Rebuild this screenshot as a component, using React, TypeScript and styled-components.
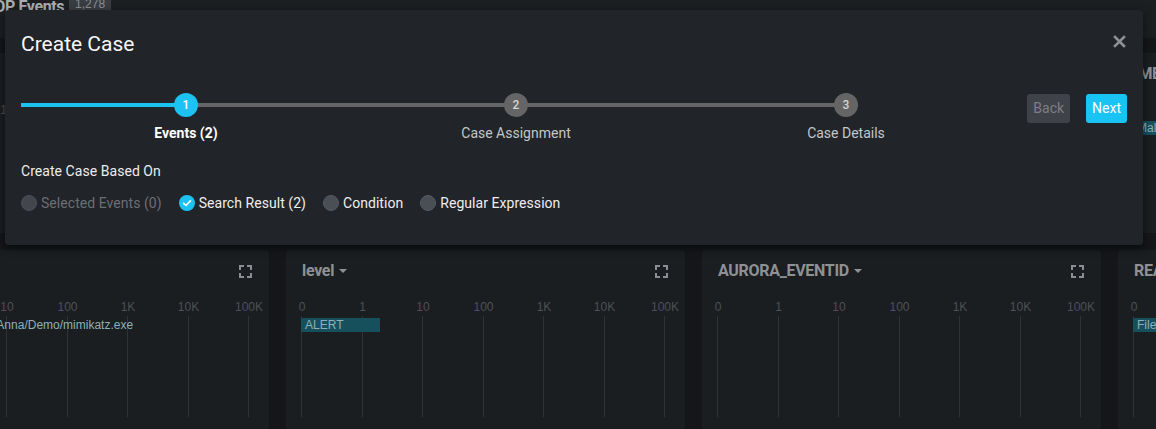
import React from "react";
import styled, { createGlobalStyle } from "styled-components";

const GlobalStyle = createGlobalStyle`
  html, body { margin: 0; padding: 0; background: #141619; }
  body { font-family: Roboto, "Liberation Sans", sans-serif; overflow: hidden; }
`;

const Screen = styled.div`
  position: relative;
  width: 1156px;
  height: 429px;
  overflow: hidden;
  background: #141619;
`;

/* ---------- background dashboard ---------- */

const TopBar = styled.header`
  display: flex;
  align-items: flex-start;
  gap: 5px;
  height: 46px;
  margin-top: -8px;
  padding-top: 5px;
  box-sizing: border-box;
  background: #1c1f22;
`;

const TopTitle = styled.h1`
  margin: 0 0 0 -15px;
  font: 700 16px/20px Roboto, sans-serif;
  letter-spacing: -0.4px;
  color: #a9acb0;
  white-space: nowrap;
`;

const Badge = styled.span`
  display: inline-block;
  margin-top: -2px;
  padding: 0 6px;
  height: 18px;
  border-radius: 3px;
  background: #393c41;
  color: #8b8e92;
  font: 400 12px/18px "Liberation Sans", Arial, sans-serif;
`;

const PanelGrid = styled.div`
  display: grid;
  grid-template-columns: repeat(4, 399px);
  column-gap: 17px;
  row-gap: 17px;
  margin: 15px 0 0 -130px;
`;

const Panel = styled.section`
  height: 180px;
  background: #1b1e21;
  border-radius: 4px;
  display: flex;
  flex-direction: column;
  overflow: hidden;
`;

const PanelHead = styled.div`
  height: 42px;
  padding: 0 17px 0 16px;
  display: flex;
  align-items: center;
  justify-content: space-between;
`;

const PanelTitle = styled.div`
  display: inline-flex;
  align-items: center;
  gap: 5px;
  font: 700 16px/20px Roboto, sans-serif;
  letter-spacing: -0.3px;
  color: #8e9195;
  white-space: nowrap;
`;

const Caret = styled.span`
  width: 0;
  height: 0;
  border-left: 4px solid transparent;
  border-right: 4px solid transparent;
  border-top: 4px solid #8e9195;
`;

const Chart = styled.div`
  margin: 8px 21px 0 15px;
  position: relative;
`;

const AxisLabels = styled.div`
  position: relative;
  height: 14px;
`;

const Tick = styled.span`
  position: absolute;
  top: 0;
  transform: translateX(-50%);
  font: 400 12px/14px "Liberation Sans", Arial, sans-serif;
  color: #4d5156;
  white-space: nowrap;
`;

const Plot = styled.div`
  position: relative;
  margin-top: 2px;
  height: 101px;
`;

const GridLine = styled.span`
  position: absolute;
  top: 0;
  bottom: 0;
  width: 1px;
  background: #2f3337;
`;

const Bars = styled.div`
  position: relative;
  padding-top: 2px;
  display: flex;
  flex-direction: column;
  gap: 4px;
`;

const Bar = styled.div`
  height: 14px;
  box-sizing: border-box;
  padding-left: 4px;
  background: #17505d;
  color: #8db0b9;
  font: 400 12px/14px "Liberation Sans", Arial, sans-serif;
  white-space: nowrap;
  overflow: visible;
`;

const ExpandIcon = () => (
  <svg width="13" height="13" viewBox="0 0 13 13" fill="none" stroke="#8a8d91" strokeWidth="2">
    <path d="M1 5V1H5M8 1H12V5M12 8V12H8M5 12H1V8" />
  </svg>
);

const ticks = ["0", "1", "10", "100", "1K", "10K", "100K"];
const STEP = 60.5;

type BarData = { label: string; value: number };
type PanelData = { title: string; bars: BarData[] };

const pos = (v: number) => (v <= 0 ? 0 : (1 + Math.log10(v)) * STEP);

const ChartPanel = ({ data }: { data: PanelData }) => (
  <Panel>
    <PanelHead>
      <PanelTitle>
        {data.title}
        <Caret />
      </PanelTitle>
      <ExpandIcon />
    </PanelHead>
    <Chart>
      <AxisLabels>
        {ticks.map((t, i) => (
          <Tick key={t} style={{ left: i * STEP + 1 }}>
            {t}
          </Tick>
        ))}
      </AxisLabels>
      <Plot>
        {ticks.map((t, i) => (
          <GridLine key={t} style={{ left: i * STEP }} />
        ))}
        <Bars>
          {data.bars.map((b) => (
            <Bar key={b.label} style={{ width: pos(b.value) }}>
              {b.label}
            </Bar>
          ))}
        </Bars>
      </Plot>
    </Chart>
  </Panel>
);

const panels: PanelData[] = [
  { title: "EventType", bars: [{ label: "1", value: 2 }] },
  { title: "source", bars: [{ label: "Sigma", value: 2 }] },
  { title: "RuleName", bars: [{ label: "Mimikatz", value: 2 }] },
  { title: "IMEI", bars: [{ label: "Malware detected", value: 2 }] },
  { title: "Image", bars: [{ label: "C:/Users/Max/Tools/Anna/Demo/mimikatz.exe", value: 2 }] },
  { title: "level", bars: [{ label: "ALERT", value: 2 }] },
  { title: "AURORA_EVENTID", bars: [] },
  { title: "REASON", bars: [{ label: "File created", value: 2 }] },
];

/* ---------- modal ---------- */

const Modal = styled.div`
  position: absolute;
  left: 5px;
  top: 10px;
  width: 1138px;
  height: 235px;
  box-sizing: border-box;
  padding: 21px 16px 0 16px;
  background: #212428;
  border-radius: 4px;
  box-shadow: 0 3px 8px rgba(0, 0, 0, 0.55);
  display: flex;
  flex-direction: column;
`;

const ModalHeader = styled.div`
  display: flex;
  justify-content: space-between;
  align-items: flex-start;
  height: 26px;
`;

const Title = styled.h2`
  margin: 0;
  font: 400 21px/26px Roboto, sans-serif;
  color: #f6f6f6;
`;

const CloseButton = styled.button`
  margin: 4px 1px 0 0;
  padding: 0;
  border: 0;
  background: transparent;
  width: 13px;
  height: 13px;
  display: flex;
  cursor: pointer;
`;

const StepRow = styled.div`
  margin-top: 36px;
  display: flex;
  justify-content: space-between;
  align-items: flex-start;
`;

const Stepper = styled.div`
  display: flex;
  width: 990px;
`;

const Step = styled.div<{ $left: string; $right: string }>`
  width: 330px;
  display: flex;
  flex-direction: column;
  align-items: center;
  position: relative;

  &::before,
  &::after {
    content: "";
    position: absolute;
    top: 10px;
    height: 4px;
  }
  &::before {
    left: 0;
    right: 50%;
    background: ${(p) => p.$left};
  }
  &::after {
    left: 50%;
    right: 0;
    background: ${(p) => p.$right};
  }
`;

const StepCircle = styled.div<{ $active?: boolean }>`
  position: relative;
  z-index: 1;
  width: 24px;
  height: 24px;
  border-radius: 50%;
  background: ${(p) => (p.$active ? "#1bc2f2" : "#656565")};
  color: ${(p) => (p.$active ? "#ffffff" : "#d4d4d4")};
  font: 500 12px/24px Roboto, sans-serif;
  text-align: center;
`;

const StepLabel = styled.div<{ $active?: boolean }>`
  margin-top: 8px;
  font: ${(p) => (p.$active ? 700 : 400)} 14px/16px Roboto, sans-serif;
  color: ${(p) => (p.$active ? "#ffffff" : "#c3c7cb")};
  white-space: nowrap;
`;

const Actions = styled.div`
  display: flex;
  gap: 16px;
  margin-top: 1px;
`;

const Button = styled.button<{ $primary?: boolean }>`
  height: 29px;
  padding: 0 6px;
  border: 0;
  border-radius: 3px;
  font: 400 14px/29px Roboto, sans-serif;
  background: ${(p) => (p.$primary ? "#19c3f3" : "#3f4349")};
  color: ${(p) => (p.$primary ? "#ffffff" : "#7b7f85")};
  cursor: ${(p) => (p.$primary ? "pointer" : "default")};
`;

const SectionLabel = styled.div`
  margin-top: 22px;
  font: 400 14px/16px Roboto, sans-serif;
  letter-spacing: 0.05px;
  color: #ececec;
`;

const RadioRow = styled.div`
  margin-top: 15px;
  display: flex;
  align-items: center;
  gap: 17px;
`;

const RadioItem = styled.label<{ $disabled?: boolean }>`
  display: inline-flex;
  align-items: center;
  gap: 4px;
  font: 400 14px/18px Roboto, sans-serif;
  letter-spacing: 0.05px;
  color: ${(p) => (p.$disabled ? "#6b6f75" : "#eeeeee")};
  white-space: nowrap;
`;

const RadioDot = styled.span<{ $disabled?: boolean }>`
  width: 16px;
  height: 16px;
  box-sizing: border-box;
  border-radius: 50%;
  background: ${(p) => (p.$disabled ? "#43474d" : "#4a4e55")};
  border: 1px solid ${(p) => (p.$disabled ? "#4d5157" : "#575b61")};
`;

const CheckedDot = () => (
  <svg width="16" height="16" viewBox="0 0 16 16">
    <circle cx="8" cy="8" r="8" fill="#1bc2f2" />
    <path d="M4.6 8.3L7 10.4L11.4 5.9" fill="none" stroke="#ffffff" strokeWidth="1.6" strokeLinecap="round" strokeLinejoin="round" />
  </svg>
);

const CloseIcon = () => (
  <svg width="13" height="13" viewBox="0 0 13 13" stroke="#8e9195" strokeWidth="2.6" strokeLinecap="square">
    <path d="M2 2L11 11M11 2L2 11" />
  </svg>
);

const CYAN = "#1bc2f2";
const GRAY = "#666666";

export default function App() {
  return (
    <>
      <GlobalStyle />
      <Screen>
        <TopBar>
          <TopTitle>TOP Events</TopTitle>
          <Badge>1,278</Badge>
        </TopBar>
        <PanelGrid>
          {panels.map((p, i) => (
            <ChartPanel key={i} data={p} />
          ))}
        </PanelGrid>

        <Modal role="dialog" aria-label="Create Case">
          <ModalHeader>
            <Title>Create Case</Title>
            <CloseButton aria-label="Close">
              <CloseIcon />
            </CloseButton>
          </ModalHeader>
          <StepRow>
            <Stepper>
              <Step $left={CYAN} $right={GRAY}>
                <StepCircle $active>1</StepCircle>
                <StepLabel $active>Events (2)</StepLabel>
              </Step>
              <Step $left={GRAY} $right={GRAY}>
                <StepCircle>2</StepCircle>
                <StepLabel>Case Assignment</StepLabel>
              </Step>
              <Step $left={GRAY} $right="transparent">
                <StepCircle>3</StepCircle>
                <StepLabel>Case Details</StepLabel>
              </Step>
            </Stepper>
            <Actions>
              <Button disabled>Back</Button>
              <Button $primary>Next</Button>
            </Actions>
          </StepRow>
          <SectionLabel>Create Case Based On</SectionLabel>
          <RadioRow>
            <RadioItem $disabled>
              <RadioDot $disabled />
              Selected Events (0)
            </RadioItem>
            <RadioItem>
              <CheckedDot />
              Search Result (2)
            </RadioItem>
            <RadioItem>
              <RadioDot />
              Condition
            </RadioItem>
            <RadioItem>
              <RadioDot />
              Regular Expression
            </RadioItem>
          </RadioRow>
        </Modal>
      </Screen>
    </>
  );
}
